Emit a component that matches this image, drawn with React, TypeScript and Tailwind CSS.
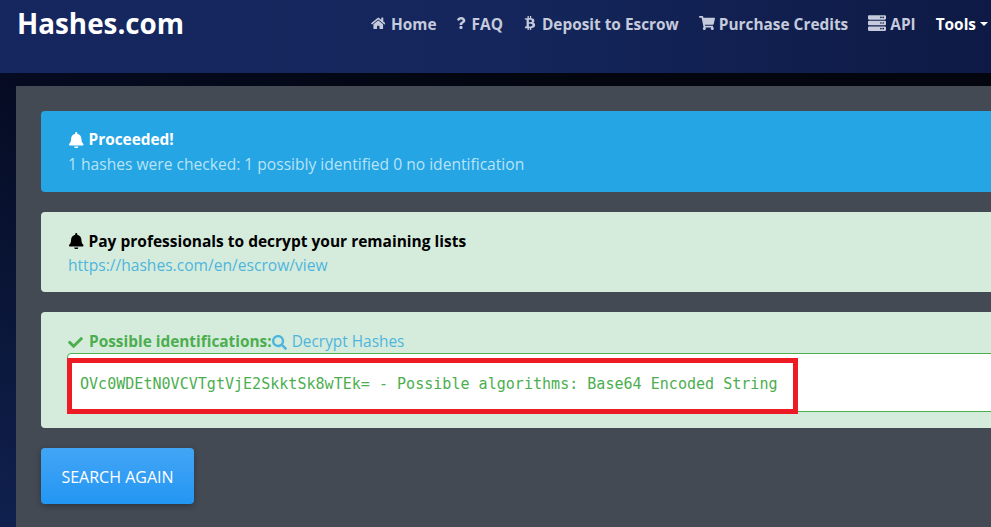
import { FaHome, FaQuestion, FaBtc, FaShoppingCart, FaServer, FaBell, FaCheck, FaSearch } from "react-icons/fa";

const nav = [
  { Icon: FaHome, label: "Home", size: "text-[14.5px]", gap: "gap-[6px]", mr: "mr-[18px]" },
  { Icon: FaQuestion, label: "FAQ", size: "text-[12px]", gap: "gap-[5px]", mr: "mr-[20px]" },
  { Icon: FaBtc, label: "Deposit to Escrow", size: "text-[14px]", gap: "gap-[5px]", mr: "mr-[20px]" },
  { Icon: FaShoppingCart, label: "Purchase Credits", size: "text-[16px]", gap: "gap-[4px]", mr: "mr-[20px]" },
  { Icon: FaServer, label: "API", size: "text-[18px]", gap: "gap-[4px]", mr: "mr-[20px]" },
];

export default function App() {
  return (
    <div className="w-[991px] h-[527px] overflow-hidden bg-gradient-to-tr from-[#10214f] via-[#050a20] via-45% to-[#03060f] to-70% font-['Open_Sans','Noto_Sans',sans-serif]">
      <header className="h-[73px] flex items-start justify-between bg-gradient-to-r from-[#16275f] via-[#14265c] to-[#0e1a45]">
        <a className="ml-[17px] mt-[3px] text-[27.8px] leading-[40px] font-bold text-white">Hashes.com</a>
        <nav className="flex items-center h-[49px] text-[15.4px] font-bold text-[#c5cbdc]">
          {nav.map(({ Icon, label, size, gap, mr }) => (
            <a key={label} className={`flex items-center ${gap} ${mr}`}>
              <Icon className={`${size} -mt-[2px]`} />
              <span>{label}</span>
            </a>
          ))}
          <a className="flex items-center text-white">
            Tools
            <span className="ml-[4px] mr-[3px] border-x-[4px] border-t-[4px] border-x-transparent border-t-white -mt-[1px]" />
          </a>
        </nav>
      </header>
      <main className="ml-4 mt-[13px] w-[1100px] h-[441px] bg-[#434a54] pl-[25px] pt-[25px]">
        <section className="h-[81px] rounded-[4px] bg-[#25a5e4] pl-[27px] pt-[17px] text-[15.6px] leading-[24px] text-[#b9e3f7]">
          <div className="flex items-center gap-[4px] font-bold text-[15.4px] text-white">
            <FaBell className="text-[16.5px]" />
            <span>Proceeded!</span>
          </div>
          <div>1 hashes were checked: 1 possibly identified 0 no identification</div>
        </section>
        <section className="h-[80px] mt-[20px] rounded-[4px] bg-[#d5ecdc] pl-[27px] pt-[17px] text-[15.6px] leading-[24px]">
          <div className="flex items-center gap-[4px] font-bold text-[15.5px] text-black">
            <FaBell className="text-[16.5px]" />
            <span>Pay professionals to decrypt your remaining lists</span>
          </div>
          <a className="text-[#4fb5dc]">https://hashes.com/en/escrow/view</a>
        </section>
        <section className="relative h-[116px] mt-[20px] rounded-[4px] bg-[#d5ecdc] pl-[26px] pt-[18px] text-[15.4px] leading-[24px]">
          <div className="flex items-center pl-[1px] font-bold text-[#4cae4f]">
            <FaCheck className="text-[15px] mr-[6px]" />
            <span>Possible identifications:</span>
            <FaSearch className="text-[15px] text-[#4fb5dc] mr-[5px]" />
            <span className="font-normal text-[#4fb5dc]">Decrypt Hashes</span>
          </div>
          <pre className="h-[59px] -mt-[1px] rounded-tl-[4px] rounded-bl-[4px] border border-[#4cae4f] bg-white pl-[12px] pt-[18px] font-['DejaVu_Sans_Mono',monospace] text-[15.05px] leading-[24px] text-[#4cae4f]">OVc0WDEtN0VCVTgtVjE2SkktSk8wTEk= - Possible algorithms: Base64 Encoded String</pre>
          <div className="absolute left-[26px] top-[46px] w-[731px] h-[56px] border-[5px] border-[#ed1c24]" />
        </section>
        <a className="mt-[20px] flex w-[153px] h-[56px] pt-[1px] items-center justify-center rounded-[4px] bg-gradient-to-b from-[#42a5f5] to-[#2196f3] text-[16px] text-white shadow-[0_2px_6px_rgba(0,0,0,0.3)]">SEARCH AGAIN</a>
      </main>
    </div>
  );
}
